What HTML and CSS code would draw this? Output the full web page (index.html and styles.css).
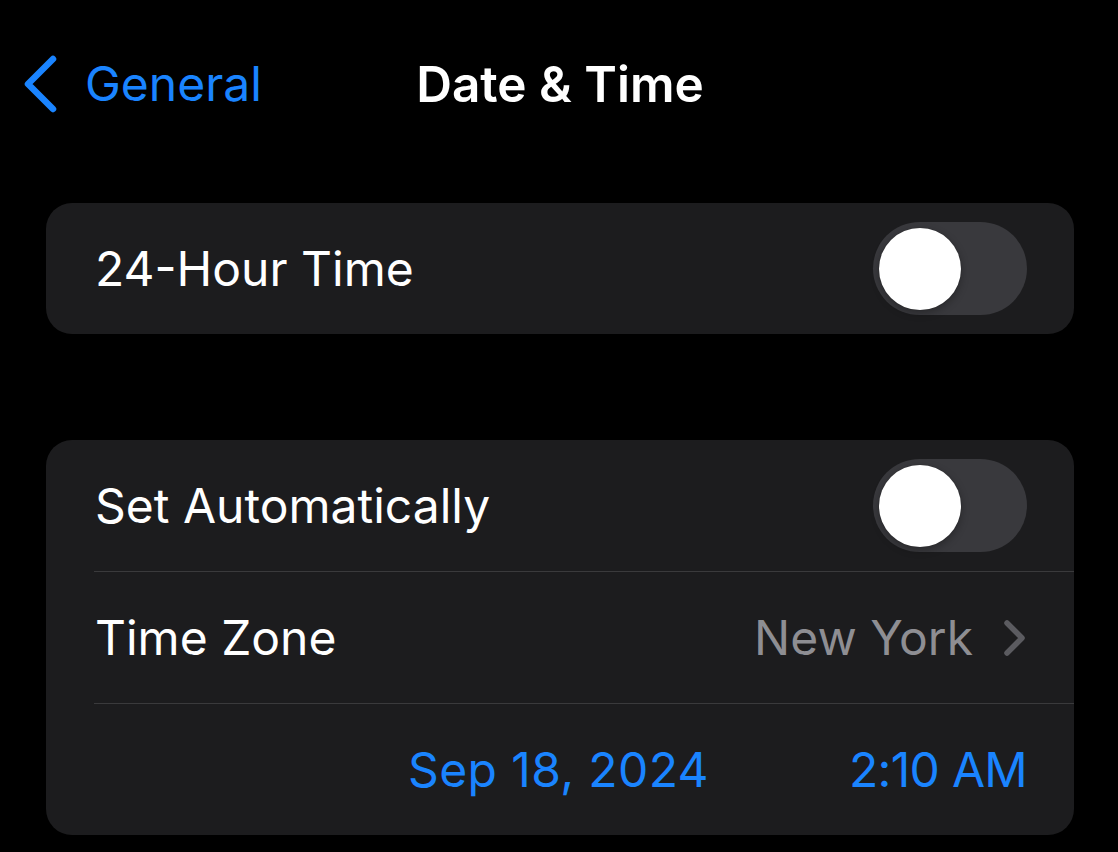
FILE: index.html
```html
<!DOCTYPE html>
<html lang="en">

<head>
    <meta charset="UTF-8">
    <meta name="viewport" content="width=device-width, initial-scale=1.0">
    <title>Date &amp; Time</title>
    <link rel="stylesheet" href="styles.css">
</head>

<body>
    <header class="navbar">
        <a class="back" href="#">
            <svg class="back-icon" width="36" height="58" viewBox="0 0 36 58">
                <path d="M31 4 L6 29 L31 54" fill="none" stroke="#1a84ff" stroke-width="6.5"
                    stroke-linecap="round" stroke-linejoin="round" />
            </svg>
            <span>General</span>
        </a>
        <h1 class="title">Date &amp; Time</h1>
    </header>

    <section class="group">
        <div class="row">
            <span class="label">24-Hour Time</span>
            <span class="switch"><span class="knob"></span></span>
        </div>
    </section>

    <section class="group">
        <div class="row">
            <span class="label">Set Automatically</span>
            <span class="switch"><span class="knob"></span></span>
        </div>
        <div class="row">
            <span class="label">Time Zone</span>
            <span class="detail">
                New York
                <svg class="chevron" width="24" height="38" viewBox="0 0 24 38">
                    <path d="M4 4 L19 19 L4 34" fill="none" stroke="#5b5b60" stroke-width="5.5"
                        stroke-linecap="round" stroke-linejoin="round" />
                </svg>
            </span>
        </div>
        <div class="row picker">
            <span class="date">Sep 18, 2024</span>
            <span class="time">2:10 AM</span>
        </div>
    </section>
</body>

</html>
```

FILE: styles.css
```css
* {
    box-sizing: border-box;
}

body {
    margin: 0;
    background-color: #000;
    color: #fff;
    font-family: Inter, "Noto Sans", sans-serif;
    font-size: 48px;
    width: 1118px;
    height: 852px;
    overflow: hidden;
}

.navbar {
    position: relative;
    height: 168px;
    padding-top: 54px;
    display: flex;
    justify-content: center;
}

.back {
    position: absolute;
    left: 22px;
    top: 54px;
    display: flex;
    align-items: center;
    gap: 27px;
    color: #1a84ff;
    text-decoration: none;
    height: 60px;
}

.back span {
    line-height: 60px;
}

.title {
    margin: 0 0 0 2px;
    height: 60px;
    line-height: 60px;
    font-size: 49.5px;
    font-weight: 600;
}

.group {
    margin: 35px 44px 0 46px;
    background-color: #1c1c1e;
    border-radius: 26px;
    overflow: hidden;
}

.group + .group {
    margin-top: 106px;
}

.row {
    height: 132px;
    margin-left: 48px;
    padding-right: 47px;
    display: flex;
    align-items: center;
    justify-content: space-between;
    border-top: 1px solid #3a3a3c;
}

.row:first-child {
    border-top: none;
    height: 131px;
}

.label {
    padding-left: 1px;
}

.switch {
    width: 154px;
    height: 93px;
    border-radius: 47px;
    background-color: #39393d;
    padding: 5px 6px;
    display: flex;
    align-items: center;
}

.knob {
    width: 82px;
    height: 82px;
    border-radius: 50%;
    background-color: #fff;
    box-shadow: 0 3px 8px rgba(0, 0, 0, 0.3), 0 0 0 1px rgba(0, 0, 0, 0.05);
}

.detail {
    display: flex;
    align-items: center;
    gap: 30px;
    color: #8e8e93;
}

.chevron {
    margin-right: 0;
}

.picker {
    justify-content: flex-end;
    gap: 140px;
    color: #1a84ff;
}

.date {
    letter-spacing: 0.4px;
}

.time {
    letter-spacing: -0.7px;
}
```
